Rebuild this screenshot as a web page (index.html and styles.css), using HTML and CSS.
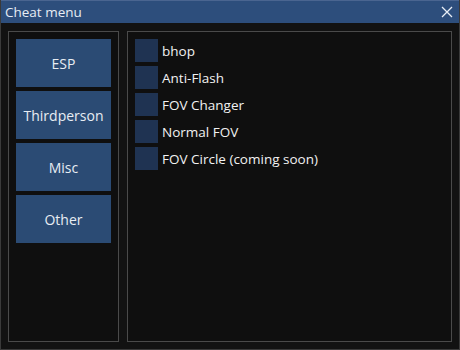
FILE: index.html
```html
<!DOCTYPE html>
<html>
<head>
  <title>Cheat menu</title>
  <link rel="stylesheet" href="styles.css">
</head>
<body>
  <div class="window">
    <div class="titlebar">
      <span class="title">Cheat menu</span>
      <svg class="close" width="12" height="12" viewBox="0 0 12 12">
        <path d="M1 1 L11 11 M11 1 L1 11" stroke="#e8eef6" stroke-width="1.3" fill="none"/>
      </svg>
    </div>
    <div class="content">
      <div class="panel tabs">
        <div class="tab">ESP</div>
        <div class="tab">Thirdperson</div>
        <div class="tab">Misc</div>
        <div class="tab">Other</div>
      </div>
      <div class="panel options">
        <label class="option"><span class="box"></span>bhop</label>
        <label class="option"><span class="box"></span>Anti-Flash</label>
        <label class="option"><span class="box"></span>FOV Changer</label>
        <label class="option"><span class="box"></span>Normal FOV</label>
        <label class="option"><span class="box"></span>FOV Circle (coming soon)</label>
      </div>
    </div>
  </div>
</body>
</html>
```

FILE: styles.css
```css
/* Page */
body {
  margin: 0;
  background-color: #0f0f0f;
  font-family: 'Open Sans', 'DejaVu Sans', sans-serif;
  color: #f0f0f0;
}

/* Window frame */
.window {
  width: 460px;
  height: 350px;
  box-sizing: border-box;
  border: 1px solid #3a3a3a;
  border-top: none;
  background-color: #161616;
  display: flex;
  flex-direction: column;
}

.titlebar {
  height: 23px;
  box-sizing: border-box;
  background-color: #2d4e7c;
  border-top: 1px solid #4a6590;
  display: flex;
  align-items: center;
  justify-content: space-between;
  padding: 0 6px 0 4px;
}

.title {
  font-size: 13.5px;
  color: #e6ecf4;
}

.close {
  display: block;
}

/* Body of the window */
.content {
  flex: 1;
  display: flex;
  gap: 8px;
  padding: 8px 7px 7px 7px;
  background-color: #121212;
}

.panel {
  border: 1px solid #4a4a4a;
  background-color: #0f0f0f;
  padding: 7px;
  display: flex;
  flex-direction: column;
}

.tabs {
  width: 95px;
  gap: 4px;
}

.tab {
  height: 48px;
  background-color: #2b4b74;
  display: flex;
  align-items: center;
  justify-content: center;
  font-size: 14px;
  color: #e8edf3;
}

.options {
  flex: 1;
  gap: 4px;
}

.option {
  display: flex;
  align-items: center;
  gap: 4px;
  font-size: 13.5px;
  color: #f2f2f2;
}

.box {
  width: 23px;
  height: 23px;
  background-color: #1f3352;
}
```
